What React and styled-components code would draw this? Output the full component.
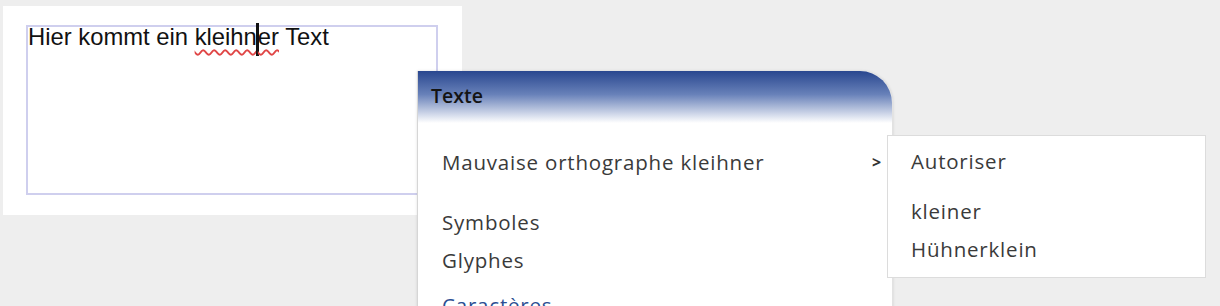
import React from 'react';
import styled, { createGlobalStyle } from 'styled-components';

const GlobalStyle = createGlobalStyle`
  html, body {
    margin: 0;
    padding: 0;
    background: #eeeeee;
    overflow: hidden;
  }
`;

const Page = styled.div`
  position: relative;
  width: 1220px;
  height: 306px;
  padding: 6px 0 0 3px;
  box-sizing: border-box;
  background: #eeeeee;
  overflow: hidden;
`;

const Panel = styled.div`
  width: 459px;
  height: 209px;
  box-sizing: border-box;
  padding: 19px 24px 20px 23px;
  background: #ffffff;
`;

const Editor = styled.div`
  height: 100%;
  box-sizing: border-box;
  border: 2px solid #cfcfee;
  font-family: "Liberation Sans", Arial, sans-serif;
  font-size: 23.8px;
  line-height: 20px;
  color: #111;
`;

const Misspelled = styled.span`
  text-decoration: underline wavy #e04646;
  text-decoration-thickness: 1.5px;
  text-underline-offset: 4px;
`;

const Caret = styled.span`
  display: inline-block;
  width: 3px;
  height: 33px;
  margin: -18px -1px 0;
  vertical-align: -11px;
  background: #111;
`;

const Menu = styled.div`
  position: absolute;
  left: 417px;
  top: 71px;
  width: 476px;
  height: 260px;
  box-sizing: border-box;
  background: #ffffff;
  border-left: 1px solid #d6d6d6;
  border-right: 1px solid #e2e2e2;
  border-top-right-radius: 32px;
  font-family: "Open Sans", "Noto Sans", sans-serif;
  box-shadow: 0 0 3px rgba(0, 0, 0, 0.12);
`;

const MenuHeader = styled.div`
  height: 52px;
  padding: 11px 0 0 13px;
  box-sizing: border-box;
  border-top-right-radius: 32px;
  background: linear-gradient(to bottom, #29478f 0%, #6881b9 45%, #ffffff 100%);
  font-size: 19.5px;
  font-weight: 600;
  color: #141414;
`;

const MenuList = styled.div`
  display: flex;
  flex-direction: column;
  padding: 24px 0 0 24px;
`;

const MenuItem = styled.div`
  display: flex;
  align-items: center;
  justify-content: space-between;
  height: 30px;
  margin-bottom: ${(p) => p.$gap || 0}px;
  padding-right: 10px;
  font-size: 20.5px;
  font-weight: 500;
  letter-spacing: 0.8px;
  color: ${(p) => (p.$accent ? '#2c4f93' : '#3a3a3a')};
`;

const Arrow = styled.span`
  font-size: 16px;
  font-weight: 700;
  color: #333;
`;

const SubMenu = styled.div`
  position: absolute;
  left: 887px;
  top: 135px;
  width: 319px;
  height: 143px;
  box-sizing: border-box;
  padding: 10px 0 0 23px;
  background: #ffffff;
  border: 1px solid #dcdcdc;
  font-family: "Open Sans", "Noto Sans", sans-serif;
`;

export default function App() {
  return (
    <>
      <GlobalStyle />
      <Page>
        <Panel>
          <Editor>
            Hier kommt ein <Misspelled>kleihn<Caret />er</Misspelled> Text
          </Editor>
        </Panel>

        <Menu>
          <MenuHeader>Texte</MenuHeader>
          <MenuList>
            <MenuItem $gap={30}>
              Mauvaise orthographe kleihner
              <Arrow>&gt;</Arrow>
            </MenuItem>
            <MenuItem $gap={8}>Symboles</MenuItem>
            <MenuItem $gap={15}>Glyphes</MenuItem>
            <MenuItem $accent>Caractères</MenuItem>
          </MenuList>
        </Menu>

        <SubMenu>
          <MenuItem $gap={20}>Autoriser</MenuItem>
          <MenuItem $gap={8}>kleiner</MenuItem>
          <MenuItem>Hühnerklein</MenuItem>
        </SubMenu>
      </Page>
    </>
  );
}
